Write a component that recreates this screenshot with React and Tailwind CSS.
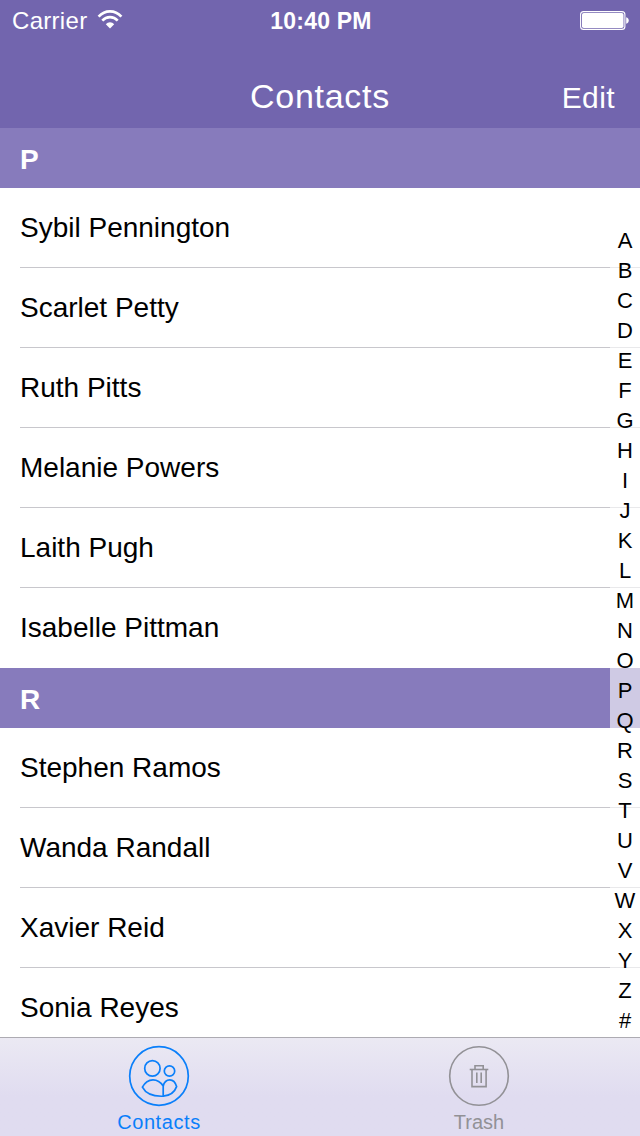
const sections = [
  {
    letter: "P",
    names: ["Sybil Pennington", "Scarlet Petty", "Ruth Pitts", "Melanie Powers", "Laith Pugh", "Isabelle Pittman"],
  },
  {
    letter: "R",
    names: ["Stephen Ramos", "Wanda Randall", "Xavier Reid", "Sonia Reyes"],
  },
];

const letters = "ABCDEFGHIJKLMNOPQRSTUVWXYZ#".split("");

function WifiIcon() {
  return (
    <svg className="ml-[10px] mt-[10px]" width="26" height="19" viewBox="0 0 26 19" fill="none" stroke="white">
      <path d="M1.6 6.6C8 -0.3 18 -0.3 24.4 6.6" strokeWidth="2.7" />
      <path d="M5.3 10.6C9.6 6 16.4 6 20.7 10.6" strokeWidth="2.6" />
      <path d="M8.8 14.3C11 11.5 15 11.5 17.2 14.3L13 18.6Z" fill="white" stroke="none" />
    </svg>
  );
}

function BatteryIcon() {
  return (
    <svg width="50" height="20" viewBox="0 0 50 20">
      <rect x="0.6" y="0.6" width="44.3" height="17.8" rx="3" fill="none" stroke="white" strokeWidth="1.1" />
      <rect x="2" y="2" width="41.5" height="15" rx="1.8" fill="white" />
      <path d="M46.2 6.2C49.6 7 49.6 12 46.2 12.8Z" fill="white" />
    </svg>
  );
}

function ContactsIcon() {
  return (
    <svg width="62" height="62" viewBox="0 0 62 62" fill="none" stroke="#0a7ffa" strokeWidth="1.7">
      <circle cx="31" cy="31" r="29.3" />
      <circle cx="24.4" cy="23.4" r="7.7" />
      <circle cx="41.5" cy="26" r="5.2" />
      <path d="M35.2 51.2V41C32.5 36.8 29 34.8 25 34.8C20.5 34.8 16.6 38 14.4 42.2C17.8 48.8 24.6 51.6 35.2 51.2Z" />
      <path d="M35.2 41C36.2 36.8 38.8 34.8 41.8 34.8C45.3 34.8 47.6 38 48.6 41.6C46.6 47.2 42.4 50.5 35.2 51.2" />
    </svg>
  );
}

function TrashIcon() {
  return (
    <svg width="62" height="62" viewBox="0 0 62 62" fill="none" stroke="#929196" strokeWidth="1.6">
      <circle cx="31" cy="31" r="29.3" />
      <path d="M21.7 24.5H40.3" />
      <path d="M27 24V20.7H35.2V24" />
      <path d="M24 24.5V41.6H38.1V24.5" />
      <path d="M28.8 27.5V38M33.2 27.5V38" />
    </svg>
  );
}

function Section({ letter, names }) {
  return (
    <div>
      <h2 className="h-[60px] pl-5 bg-[#877bbc] text-white text-[28px] font-bold leading-[63px]">{letter}</h2>
      <ul>
        {names.map((name, index) => (
          <li key={name} className="h-20 pl-5">
            <div className={index < names.length - 1 ? "h-20 border-b border-[#c8c7cc]" : "h-20"}>
              <span className="block text-[28px] leading-[79px] text-black">{name}</span>
            </div>
          </li>
        ))}
      </ul>
    </div>
  );
}

export default function App() {
  return (
    <div className="w-[640px] h-[1136px] flex flex-col overflow-hidden bg-white font-['Liberation_Sans',Arial,sans-serif]">
      <header className="h-32 shrink-0 bg-[#7265ae] text-white">
        {/* Status bar */}
        <div className="h-10 grid grid-cols-3 pl-3 pr-[10px]">
          <div className="flex items-start">
            <span className="text-[24px] leading-[42px] tracking-[0.3px]">Carrier</span>
            <WifiIcon />
          </div>
          <span className="text-center text-[23px] leading-[42px] font-bold tracking-[0.2px]">10:40 PM</span>
          <div className="flex justify-end pt-[11px]">
            <BatteryIcon />
          </div>
        </div>
        {/* Navigation bar */}
        <div className="h-[88px] grid grid-cols-3 pr-[25px] pl-[25px]">
          <span />
          <h1 className="text-center text-[34px] leading-[112px] tracking-[0.7px]">Contacts</h1>
          <button className="text-right text-[30px] leading-[116px] h-[88px] tracking-[0.4px]">Edit</button>
        </div>
      </header>

      <main className="relative flex-1 min-h-0 overflow-hidden">
        {sections.map((section) => (
          <Section key={section.letter} letter={section.letter} names={section.names} />
        ))}
        {/* Letter index over the list */}
        <nav className="absolute right-0 top-[60px] bottom-0 w-[30px] pt-[37px] bg-white/60">
          {letters.map((letter) => (
            <span key={letter} className="flex justify-center h-[30px] text-[22px] leading-[31px] text-black">
              {letter}
            </span>
          ))}
        </nav>
      </main>

      <footer className="h-[99px] shrink-0 grid grid-cols-2 border-t border-[#adabb2] bg-linear-to-b from-[#ebe9f3] to-[#e0dcf0] to-60%">
        <div className="flex flex-col items-center pt-[7px] pr-[2px] text-[#0a7ffa]">
          <ContactsIcon />
          <span className="text-[20px] leading-[30px] tracking-[0.6px]">Contacts</span>
        </div>
        <div className="flex flex-col items-center pt-[7px] pr-[2px] text-[#929196]">
          <TrashIcon />
          <span className="text-[20px] leading-[30px]">Trash</span>
        </div>
      </footer>
    </div>
  );
}
